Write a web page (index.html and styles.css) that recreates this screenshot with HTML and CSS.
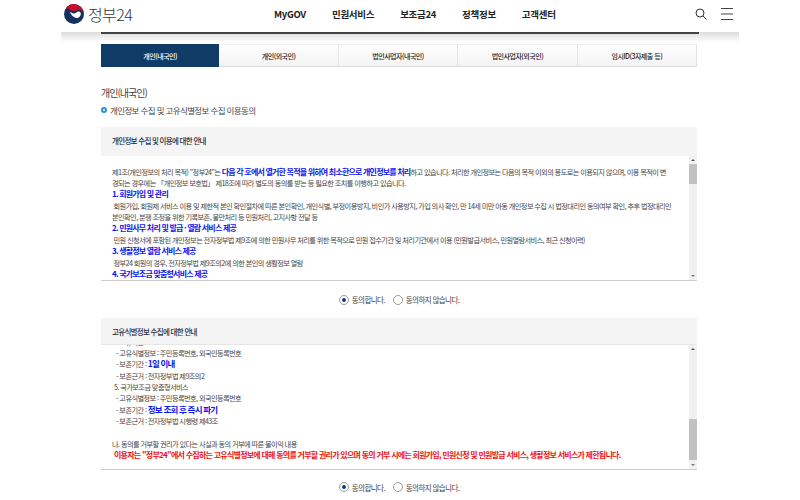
FILE: index.html
```html
<!DOCTYPE html>
<html lang="ko">
<head>
<meta charset="utf-8">
<title>정부24</title>
<link rel="stylesheet" href="styles.css">
</head>
<body>
<header class="header">
  <div class="logo">
    <svg class="logo-mark" width="20" height="20" viewBox="0 0 20 20">
      <circle cx="10" cy="10" r="10" fill="#12315f"/>
      <path d="M1.6 4.6A10 10 0 0 1 19.9 10.4C19 6.4 15 5 12.6 6.4 9.6 8 7.6 6.4 5.6 5.2 4.2 4.4 2.8 4.2 1.6 4.6Z" fill="#c8102e"/>
      <path d="M5.6 7.6C7.6 9.6 10.6 10 12.4 8.4 14 7 16.4 7.4 16.8 9.4 17 12.6 13.8 15 10.8 13.6 8.4 12.6 7 10.6 5.6 7.6Z" fill="#fff"/>
    </svg>
    <span class="logo-text">정부24</span>
  </div>
  <nav class="nav">
    <a class="nav-item">MyGOV</a>
    <a class="nav-item">민원서비스</a>
    <a class="nav-item">보조금24</a>
    <a class="nav-item">정책정보</a>
    <a class="nav-item">고객센터</a>
  </nav>
  <div class="tools">
    <svg width="12" height="12" viewBox="0 0 12 12" fill="none" stroke="#333" stroke-width="1">
      <circle cx="5" cy="5" r="4"/><path d="M8 8l3.5 3.5"/>
    </svg>
    <svg width="12" height="12" viewBox="0 0 12 12" stroke="#444" stroke-width="1">
      <path d="M0 .5h12M0 6h12M0 11.5h12"/>
    </svg>
  </div>
</header>
<div class="shadow"><div class="shadow-line"></div></div>
<main class="main">
  <div class="tabs">
    <div class="tab active">개인(내국인)</div>
    <div class="tab">개인(외국인)</div>
    <div class="tab">법인사업자(내국인)</div>
    <div class="tab">법인사업자(외국인)</div>
    <div class="tab">임시ID(3자제출 등)</div>
  </div>
  <h2 class="title">개인(내국인)</h2>
  <p class="subtitle"><span class="bullet"></span>개인정보 수집 및 고유식별정보 수집 이용동의</p>

  <section class="box">
    <h3 class="box-head">개인정보 수집 및 이용에 대한 안내</h3>
    <div class="box-body">
      <div class="scroll-text first">
        <p>제1조(개인정보의 처리 목적) "정부24"는 <b class="blue">다음 각 호에서 열거한 목적을 위하여 최소한으로 개인정보를 처리</b>하고 있습니다. 처리한 개인정보는 다음의 목적 이외의 용도로는 이용되지 않으며, 이용 목적이 변</p>
        <p>경되는 경우에는 「개인정보 보호법」 제18조에 따라 별도의 동의를 받는 등 필요한 조치를 이행하고 있습니다.</p>
        <p><b class="blue">1. 회원가입 및 관리</b></p>
        <p>&nbsp;회원가입, 회원제 서비스 이용 및 제한적 본인 확인절차에 따른 본인확인, 개인식별, 부정이용방지, 비인가 사용방지, 가입 의사 확인, 만 14세 미만 아동 개인정보 수집 시 법정대리인 동의여부 확인, 추후 법정대리인</p>
        <p>본인확인, 분쟁 조정을 위한 기록보존, 불만처리 등 민원처리, 고지사항 전달 등</p>
        <p><b class="blue">2. 민원사무 처리 및 발급 · 열람 서비스 제공</b></p>
        <p>&nbsp;민원 신청서에 포함된 개인정보는 전자정부법 제9조에 의한 민원사무 처리를 위한 목적으로 민원 접수기관 및 처리기관에서 이용 (민원발급서비스, 민원열람서비스, 최근 신청이력)</p>
        <p><b class="blue">3. 생활정보 열람 서비스 제공</b></p>
        <p>&nbsp;정부24 회원의 경우, 전자정부법 제9조의2에 의한 본인의 생활정보 열람</p>
        <p><b class="blue">4. 국가보조금 맞춤형서비스 제공</b></p>
      </div>
      <div class="scrollbar"><span class="arrow up"></span><span class="thumb thumb-top"></span><span class="arrow down"></span></div>
    </div>
  </section>
  <div class="agree">
    <label class="radio"><span class="dot on"></span>동의합니다.</label>
    <label class="radio"><span class="dot"></span>동의하지 않습니다.</label>
  </div>

  <section class="box">
    <h3 class="box-head second-head">고유식별정보 수집에 대한 안내</h3>
    <div class="box-body">
      <div class="scroll-text second">
        <p class="ind2">- 보유기간</p>
        <p class="ind2">- 고유식별정보 : 주민등록번호, 외국인등록번호</p>
        <p class="ind2">- 보존기간 : <b class="blue big">1일 이내</b></p>
        <p class="ind2">- 보존근거 : 전자정부법 제9조의2</p>
        <p class="ind1">5. 국가보조금 맞춤형서비스</p>
        <p class="ind2">- 고유식별정보 : 주민등록번호, 외국인등록번호</p>
        <p class="ind2">- 보존기간 : <b class="blue big">정보 조회 후 즉시 파기</b></p>
        <p class="ind2">- 보존근거 : 전자정부법 시행령 제43조</p>
        <p>&nbsp;</p>
        <p>나. 동의를 거부할 권리가 있다는 사실과 동의 거부에 따른 불이익 내용</p>
        <p class="ind1"><b class="red">이용자는 "정부24"에서 수집하는 고유식별정보에 대해 동의를 거부할 권리가 있으며 동의 거부 시에는 회원가입, 민원신청 및 민원발급 서비스, 생활정보 서비스가 제한됩니다.</b></p>
      </div>
      <div class="scrollbar"><span class="arrow up"></span><span class="thumb thumb-bottom"></span><span class="arrow down"></span></div>
    </div>
  </section>
  <div class="agree last">
    <label class="radio"><span class="dot on"></span>동의합니다.</label>
    <label class="radio"><span class="dot"></span>동의하지 않습니다.</label>
  </div>
</main>
</body>
</html>
```
FILE: styles.css
```css
* { box-sizing: border-box; margin: 0; padding: 0; }
html, body { height: 500px; overflow: hidden; }
body { background: #fff; font-family: "Noto Sans CJK KR", "Noto Sans", sans-serif; color: #333; }

.header { display: flex; align-items: center; height: 32px; padding: 0 67px 4px 64px; }
.logo { display: flex; align-items: center; gap: 4px; width: 210px; }
.logo-text { font-size: 16px; font-weight: 300; color: #333; letter-spacing: -0.6px; line-height: 20px; }
.nav { display: flex; gap: 26px; flex: 1; }
.nav-item { font-size: 9.5px; font-weight: 700; color: #222; line-height: 14px; white-space: nowrap; letter-spacing: -0.3px; }
.tools { display: flex; gap: 14px; align-items: center; }

.shadow { margin: 0 61px; height: 10px; background: linear-gradient(#dcdcdc, #fff); padding: 0 40px; }
.shadow-line { height: 1.5px; background: #444; }

.main { margin: 2px 103px 0 101px; width: 596px; }

.tabs { display: flex; height: 23px; }
.tab { flex: 1; display: flex; align-items: center; justify-content: center; font-size: 7px; letter-spacing: -0.5px; color: #222; font-weight: 500;
  background: linear-gradient(#fff, #f3f3f3); border-top: 1px solid #f0f0f0; border-right: 1px solid #e4e4e4; border-bottom: 1px solid #dcdcdc; }
.tab.active { background: #0f3b66; color: #fff; border: 0; }

.title { font-size: 10px; font-weight: 400; color: #444; margin-top: 19px; line-height: 14px; letter-spacing: -1px; }
.subtitle { display: flex; align-items: center; gap: 3px; font-size: 8.5px; color: #444; margin-top: 3px; line-height: 14px; letter-spacing: -0.63px; margin-bottom: 10px; }
.bullet { width: 6px; height: 6px; border: 2px solid #2f8fe0; border-radius: 50%; background: #fff; }

.box-head { height: 29px; background: #f4f4f4; font-size: 7.5px; font-weight: 500; color: #1c2a3a; padding: 0 11px; line-height: 28px; letter-spacing: -0.7px; }
.second-head { height: 27px; line-height: 27px; border-bottom: 1px solid #e6e6e6; }
.box-body { display: flex; height: 125px; border-bottom: 1px solid #ccc; overflow: hidden; }
.scroll-text { flex: 1; overflow: hidden; font-size: 7.2px; line-height: 11.4px; color: #444; white-space: nowrap; letter-spacing: -0.58px; padding-left: 11px; }
.scroll-text p { height: 11.4px; }
.scroll-text.first { padding-top: 10.5px; }
.scroll-text.second { margin-top: -8.5px; height: 134px; }
.blue { color: #0a14ee; font-weight: 700; font-size: 8px; letter-spacing: -0.8px; line-height: 1; }
.big { font-size: 8.5px; }
.red { color: #f01010; font-weight: 700; font-size: 8px; letter-spacing: -0.74px; line-height: 1; }
.ind1 { padding-left: 2px; }
.ind2 { padding-left: 4px; }

.scrollbar { width: 8px; background: #f1f1f1; display: flex; flex-direction: column; align-items: center; position: relative; }
.thumb { position: absolute; left: 0; width: 8px; background: #c1c1c1; }
.thumb-top { top: 8px; height: 20px; }
.thumb-bottom { bottom: 9px; height: 41px; }
.arrow { position: absolute; width: 0; height: 0; border-left: 2px solid transparent; border-right: 2px solid transparent; }
.arrow.up { top: 3px; border-bottom: 2px solid #555; }
.arrow.down { bottom: 3px; border-top: 2px solid #777; }

.agree { display: flex; justify-content: center; gap: 8px; height: 37px; align-items: center; font-size: 7.5px; color: #444; letter-spacing: -0.6px; }
.agree.last { height: 34px; }
.radio { display: flex; align-items: center; gap: 3px; }
.dot { width: 10px; height: 10px; border: 1px solid #999; border-radius: 50%; background: #fff; position: relative; display: block; }
.dot.on::after { content: ""; position: absolute; inset: 2px; border-radius: 50%; background: #123a8c; }
```
